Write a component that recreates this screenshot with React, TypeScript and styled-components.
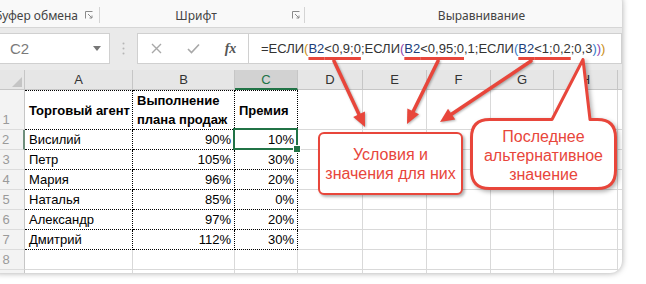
import React from 'react';
import styled, { createGlobalStyle } from 'styled-components';

const RED = '#e8463b';
const GREEN = '#217346';

const GlobalStyle = createGlobalStyle`
  html, body { margin: 0; padding: 0; background: #fff; }
  body {
    width: 646px;
    height: 284px;
    overflow: hidden;
    font-family: "Liberation Sans", Arial, sans-serif;
  }
`;

// рамка скриншота: обрезана слева и сверху, скруглена справа
const Frame = styled.div`
  position: relative;
  margin: -8px 0 0 -12px;
  width: 634px;
  height: 281px;
  border-radius: 12px;
  overflow: hidden;
  background: #fff;
  box-shadow: 0 0 6px rgba(0, 0, 0, 0.35);
  display: flex;
  flex-direction: column;
`;

const Ribbon = styled.div`
  display: flex;
  align-items: flex-end;
  height: 36px;
  flex-shrink: 0;
  box-sizing: border-box;
  background: #f9f9f9;
  border-bottom: 1px solid #d6d6d6;
`;

const Group = styled.div<{ $w: number; $pad: number }>`
  width: ${(p) => p.$w}px;
  flex-shrink: 0;
  height: 16px;
  margin-bottom: 4px;
  box-sizing: border-box;
  display: flex;
  align-items: center;
  padding-right: ${(p) => p.$pad}px;
  border-right: 1px solid #d4d4d4;
`;

const GroupLabel = styled.span`
  flex: 1;
  text-align: center;
  white-space: nowrap;
  font-family: "Noto Sans", "Open Sans", sans-serif;
  font-size: 12px;
  color: #444;
`;

const FormulaArea = styled.div`
  height: 42px;
  flex-shrink: 0;
  box-sizing: border-box;
  padding-top: 5px;
  display: flex;
  align-items: flex-start;
  background: #eaeaea;
`;

const NameBox = styled.div`
  width: 122px;
  height: 31px;
  box-sizing: border-box;
  background: #fff;
  border: 1px solid #d0d0d0;
  border-left: none;
  display: flex;
  align-items: center;
  justify-content: space-between;
  padding: 0 8px 0 22px;
  font-size: 15px;
  color: #7a7a7a;
`;

const Grip = styled.div`
  width: 27px;
  height: 31px;
  display: flex;
  align-items: center;
  justify-content: center;
`;

const FxBox = styled.div`
  width: 112px;
  height: 31px;
  box-sizing: border-box;
  background: #fff;
  border: 1px solid #d0d0d0;
  display: grid;
  grid-template-columns: 37px 37px 37px;
  align-items: center;
  justify-items: center;
`;

const Fx = styled.span`
  font-family: "Liberation Serif", "Times New Roman", serif;
  font-style: italic;
  font-weight: bold;
  font-size: 14px;
  color: #555;
`;

const FormulaInput = styled.div`
  flex: 1;
  height: 31px;
  box-sizing: border-box;
  background: #fff;
  border: 1px solid #d0d0d0;
  border-left: none;
  padding-left: 12px;
  display: flex;
  align-items: center;
  white-space: nowrap;
  font-size: 13px;
  color: #333;
`;

const Ref = styled.span`
  color: #1c3d7a;
`;

const Paren = styled.span<{ $c: string }>`
  color: ${(p) => p.$c};
`;

const Marked = styled.span`
  text-decoration: underline;
  text-decoration-color: ${RED};
  text-decoration-thickness: 3px;
  text-underline-offset: 4px;
`;

const Sheet = styled.div`
  display: grid;
  grid-template-columns: 37px 108px 102px 63px 65px 64px 64px 63px 64px 1fr;
  grid-template-rows: 20px 40px repeat(9, 20px);
  flex-shrink: 0;
  font-size: 13px;
`;

const Corner = styled.div`
  box-sizing: border-box;
  background: #e6e6e6;
  border-right: 1px solid #c6c6c6;
  border-bottom: 1px solid #c6c6c6;
  display: flex;
  align-items: flex-end;
  justify-content: flex-end;
  padding: 0 2px 2px 0;
`;

const ColHead = styled.div<{ $active?: boolean }>`
  box-sizing: border-box;
  background: ${(p) => (p.$active ? '#d2d2d2' : '#e6e6e6')};
  border-right: 1px solid #c6c6c6;
  border-bottom: ${(p) => (p.$active ? `2px solid ${GREEN}` : '1px solid #c6c6c6')};
  color: ${(p) => (p.$active ? GREEN : '#333')};
  display: flex;
  align-items: center;
  justify-content: center;
`;

const RowHead = styled.div<{ $active?: boolean }>`
  box-sizing: border-box;
  background: #f3f3f3;
  border-right: ${(p) => (p.$active ? `2px solid #6f8f7c` : '1px solid #c6c6c6')};
  border-bottom: 1px solid #dcdcdc;
  color: #9a9a9a;
  display: flex;
  align-items: flex-end;
  justify-content: center;
  line-height: 18px;
`;

const Cell = styled.div<{
  $dotted?: boolean;
  $top?: boolean;
  $right?: boolean;
  $bold?: boolean;
  $selected?: boolean;
}>`
  position: relative;
  box-sizing: border-box;
  border-right: 1px ${(p) => (p.$dotted ? 'dotted #000' : 'solid #d9d9d9')};
  border-bottom: 1px ${(p) => (p.$dotted ? 'dotted #000' : 'solid #d9d9d9')};
  ${(p) => (p.$top ? 'border-top: 1px dotted #000;' : '')}
  display: flex;
  align-items: center;
  justify-content: ${(p) => (p.$right ? 'flex-end' : 'flex-start')};
  padding: 0 3px 0 4px;
  font-weight: ${(p) => (p.$bold ? 'bold' : 'normal')};
  line-height: 19px;
  color: #000;
  white-space: nowrap;

  ${(p) =>
    p.$selected
      ? `
    &::after {
      content: '';
      position: absolute;
      inset: -2px -1px -1px -2px;
      border: 2px solid ${GREEN};
    }
    &::before {
      content: '';
      position: absolute;
      right: -4px;
      bottom: -4px;
      width: 6px;
      height: 6px;
      background: ${GREEN};
      border: 1px solid #fff;
      z-index: 2;
    }
  `
      : ''}
`;

const Overlay = styled.svg`
  position: absolute;
  left: 0;
  top: 0;
  width: 634px;
  height: 281px;
  pointer-events: none;
  overflow: visible;
  filter: drop-shadow(1px 1px 1px rgba(0, 0, 0, 0.3));
`;

const BoxNote = styled.div`
  position: absolute;
  left: 330px;
  top: 140px;
  width: 145px;
  height: 63px;
  box-sizing: border-box;
  background: #fff;
  border: 2px solid ${RED};
  border-radius: 6px;
  box-shadow: 2px 2px 3px rgba(0, 0, 0, 0.3);
  display: flex;
  align-items: center;
  justify-content: center;
  text-align: center;
`;

const NoteText = styled.div`
  font-family: "Liberation Sans", Arial, sans-serif;
  font-size: 16px;
  line-height: 19px;
  color: ${RED};
`;

const Bubble = styled.div`
  position: absolute;
  left: 482px;
  top: 66px;
  width: 147px;
  height: 132px;
  box-sizing: border-box;
  padding-top: 60px;
  display: flex;
  align-items: center;
  justify-content: center;
  text-align: center;
`;

const BubbleShape = styled.svg`
  position: absolute;
  left: 0;
  top: 0;
  width: 147px;
  height: 132px;
  overflow: visible;
  filter: drop-shadow(2px 2px 2px rgba(0, 0, 0, 0.3));
`;

const BubbleText = styled(NoteText)`
  position: relative;
  padding-top: 2px;
`;

const Launcher = () => (
  <svg width="8" height="8" viewBox="0 0 8 8">
    <path d="M0.5 7.5V0.5H7.5" fill="none" stroke="#8a8a8a" />
    <path d="M3 3L7 7M4.5 7H7V4.5" fill="none" stroke="#8a8a8a" />
  </svg>
);

// стрелка: линия и треугольный наконечник
const arrow = (x1: number, y1: number, x2: number, y2: number) => {
  const dx = x2 - x1;
  const dy = y2 - y1;
  const len = Math.hypot(dx, dy);
  const ux = dx / len;
  const uy = dy / len;
  const hl = 14;
  const hw = 6.5;
  const bx = x2 - ux * hl;
  const by = y2 - uy * hl;
  const px = -uy;
  const py = ux;
  return {
    line: { x1, y1, x2: bx + ux * 2, y2: by + uy * 2 },
    head: `${x2},${y2} ${bx + px * hw},${by + py * hw} ${bx - px * hw},${by - py * hw}`,
  };
};

const arrows = [
  arrow(334, 61, 365, 127),
  arrow(438, 61, 407, 124),
  arrow(531, 61, 440, 122),
];

const columns = ['A', 'B', 'C', 'D', 'E', 'F', 'G', 'H'];

const data: [string, string, string][] = [
  ['Висилий', '90%', '10%'],
  ['Петр', '105%', '30%'],
  ['Мария', '96%', '20%'],
  ['Наталья', '85%', '0%'],
  ['Александр', '97%', '20%'],
  ['Дмитрий', '112%', '30%'],
];

const EmptyCells = ({ from }: { from: number }) => (
  <>
    {columns.slice(from).map((c) => (
      <Cell key={c} />
    ))}
    <Cell />
  </>
);

const App = () => {
  return (
    <>
      <GlobalStyle />
      <Frame>
        <Ribbon>
          <Group $w={112} $pad={6}>
            <GroupLabel>Буфер обмена</GroupLabel>
            <Launcher />
          </Group>
          <Group $w={205} $pad={4}>
            <GroupLabel>Шрифт</GroupLabel>
            <Launcher />
          </Group>
          <Group $w={354} $pad={0}>
            <GroupLabel>Выравнивание</GroupLabel>
          </Group>
        </Ribbon>

        <FormulaArea>
          <NameBox>
            <span>C2</span>
            <svg width="8" height="5" viewBox="0 0 8 5">
              <path d="M0 0H8L4 5Z" fill="#777" />
            </svg>
          </NameBox>
          <Grip>
            <svg width="3" height="13" viewBox="0 0 3 13">
              <circle cx="1.5" cy="1.5" r="1" fill="#b5b5b5" />
              <circle cx="1.5" cy="6.5" r="1" fill="#b5b5b5" />
              <circle cx="1.5" cy="11.5" r="1" fill="#b5b5b5" />
            </svg>
          </Grip>
          <FxBox>
            <svg width="11" height="11" viewBox="0 0 11 11">
              <path d="M1 1L10 10M10 1L1 10" stroke="#a8a8a8" strokeWidth="1.4" />
            </svg>
            <svg width="13" height="11" viewBox="0 0 13 11">
              <path d="M1 6L4.5 9.5L12 1.5" fill="none" stroke="#a8a8a8" strokeWidth="1.6" />
            </svg>
            <Fx>fx</Fx>
          </FxBox>
          <FormulaInput>
            =ЕСЛИ<Paren $c="#c98e12">(</Paren>
            <Marked>
              <Ref>B2</Ref>&lt;0,9;0
            </Marked>
            ;ЕСЛИ<Paren $c="#8e44ad">(</Paren>
            <Marked>
              <Ref>B2</Ref>&lt;0,95;0
            </Marked>
            ,1;ЕСЛИ<Paren $c="#3178c6">(</Paren>
            <Marked>
              <Ref>B2</Ref>&lt;1;0,2
            </Marked>
            ;0,3<Paren $c="#3178c6">)</Paren>
            <Paren $c="#8e44ad">)</Paren>
            <Paren $c="#c98e12">)</Paren>
          </FormulaInput>
        </FormulaArea>

        <Sheet>
          <Corner>
            <svg width="10" height="10" viewBox="0 0 10 10">
              <path d="M10 0V10H0Z" fill="#c4c4c4" />
            </svg>
          </Corner>
          {columns.map((c) => (
            <ColHead key={c} $active={c === 'C'}>
              {c}
            </ColHead>
          ))}
          <ColHead />

          <RowHead>1</RowHead>
          <Cell $dotted $top $bold>
            Торговый агент
          </Cell>
          <Cell $dotted $top $bold>
            <span>
              Выполнение
              <br />
              плана продаж
            </span>
          </Cell>
          <Cell $dotted $top $bold>
            Премия
          </Cell>
          <EmptyCells from={3} />

          {data.map(([name, plan, bonus], i) => (
            <React.Fragment key={name}>
              <RowHead $active={i === 0}>{i + 2}</RowHead>
              <Cell $dotted>{name}</Cell>
              <Cell $dotted $right>
                {plan}
              </Cell>
              <Cell $dotted $right $selected={i === 0}>
                {bonus}
              </Cell>
              <EmptyCells from={3} />
            </React.Fragment>
          ))}

          {[8, 9].map((n) => (
            <React.Fragment key={n}>
              <RowHead>{n}</RowHead>
              <EmptyCells from={0} />
            </React.Fragment>
          ))}
        </Sheet>

        <Overlay viewBox="0 0 634 281">
          <g transform="translate(12 8)">
            {arrows.map((a, i) => (
              <g key={i}>
                <line {...a.line} stroke={RED} strokeWidth="3.5" strokeLinecap="round" />
                <polygon points={a.head} fill={RED} />
              </g>
            ))}
          </g>
        </Overlay>

        <BoxNote>
          <NoteText>
            Условия и
            <br />
            значения для них
          </NoteText>
        </BoxNote>

        <Bubble>
          <BubbleShape viewBox="0 0 147 132">
            <path
              d="M19.5 61.5 L82 61.5 L113 1.5 L120 61.5 L127.5 61.5 Q145.5 61.5 145.5 79.5 L145.5 112.5 Q145.5 130.5 127.5 130.5 L19.5 130.5 Q1.5 130.5 1.5 112.5 L1.5 79.5 Q1.5 61.5 19.5 61.5 Z"
              fill="#fff"
              stroke={RED}
              strokeWidth="3"
              strokeLinejoin="round"
            />
          </BubbleShape>
          <BubbleText>
            Последнее
            <br />
            альтернативное
            <br />
            значение
          </BubbleText>
        </Bubble>
      </Frame>
    </>
  );
};

export default App;
